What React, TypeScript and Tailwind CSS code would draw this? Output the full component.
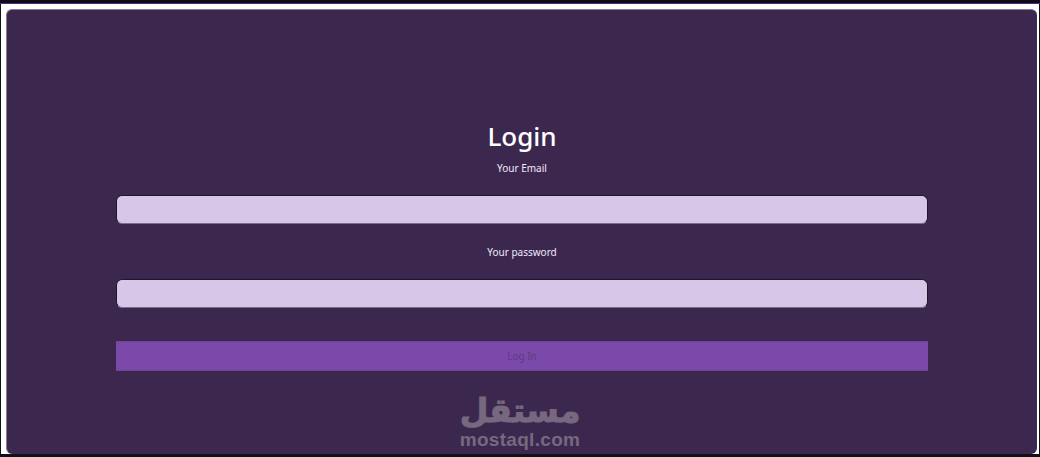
const font = "font-['Noto_Sans','Open_Sans',sans-serif]";
const inputClass =
  "mt-[19px] h-[29px] w-[812px] rounded-[6px] border border-[#1f1726] border-b-[#7a6c8c] bg-[#d8c6e9]";

export default function App() {
  return (
    <div className={`relative flex h-[457px] w-[1040px] flex-col overflow-hidden bg-[#0f1217] ${font}`}>
      <div className="h-[3px] bg-[#0e0c14]" />
      <div className="h-px bg-[#4b2a8c]" />
      <div className="mx-px flex h-[450px] flex-col bg-white pl-[5px] pr-[2px] pt-[5px]">
        <div className="flex h-[445px] flex-col items-center rounded-[6px] border-l border-t border-[#8b7b95] bg-[#3c284f] pt-[107px]">
          <h1 className="h-[38px] text-[26px] font-medium leading-[38px] text-white">Login</h1>
          <label className="mt-[6px] text-[10px] leading-[15px] text-[#f1e8fa]">Your Email</label>
          <input className={inputClass} />
          <label className="mt-[21px] text-[10px] leading-[15px] text-[#f1e8fa]">Your password</label>
          <input className={inputClass} />
          <button className="mt-[33px] h-[30px] w-[812px] border-y border-y-[#6d4594] bg-[#7b49a9] text-[10px] text-[#5f3a84]">
            Log In
          </button>
        </div>
      </div>

      {/* watermark */}
      <div className="absolute left-[460px] top-[391px] flex w-[120px] flex-col items-center text-[#77687f]">
        <span
          dir="rtl"
          className="h-[39px] font-['DejaVu_Sans',sans-serif] text-[33px] font-bold leading-[39px] [-webkit-text-stroke:1px_#77687f]"
        >
          مستقل
        </span>
        <span className="font-['Liberation_Sans',sans-serif] text-[19px] font-bold leading-[20px] tracking-[0.3px]">
          mostaql.com
        </span>
      </div>
    </div>
  );
}
